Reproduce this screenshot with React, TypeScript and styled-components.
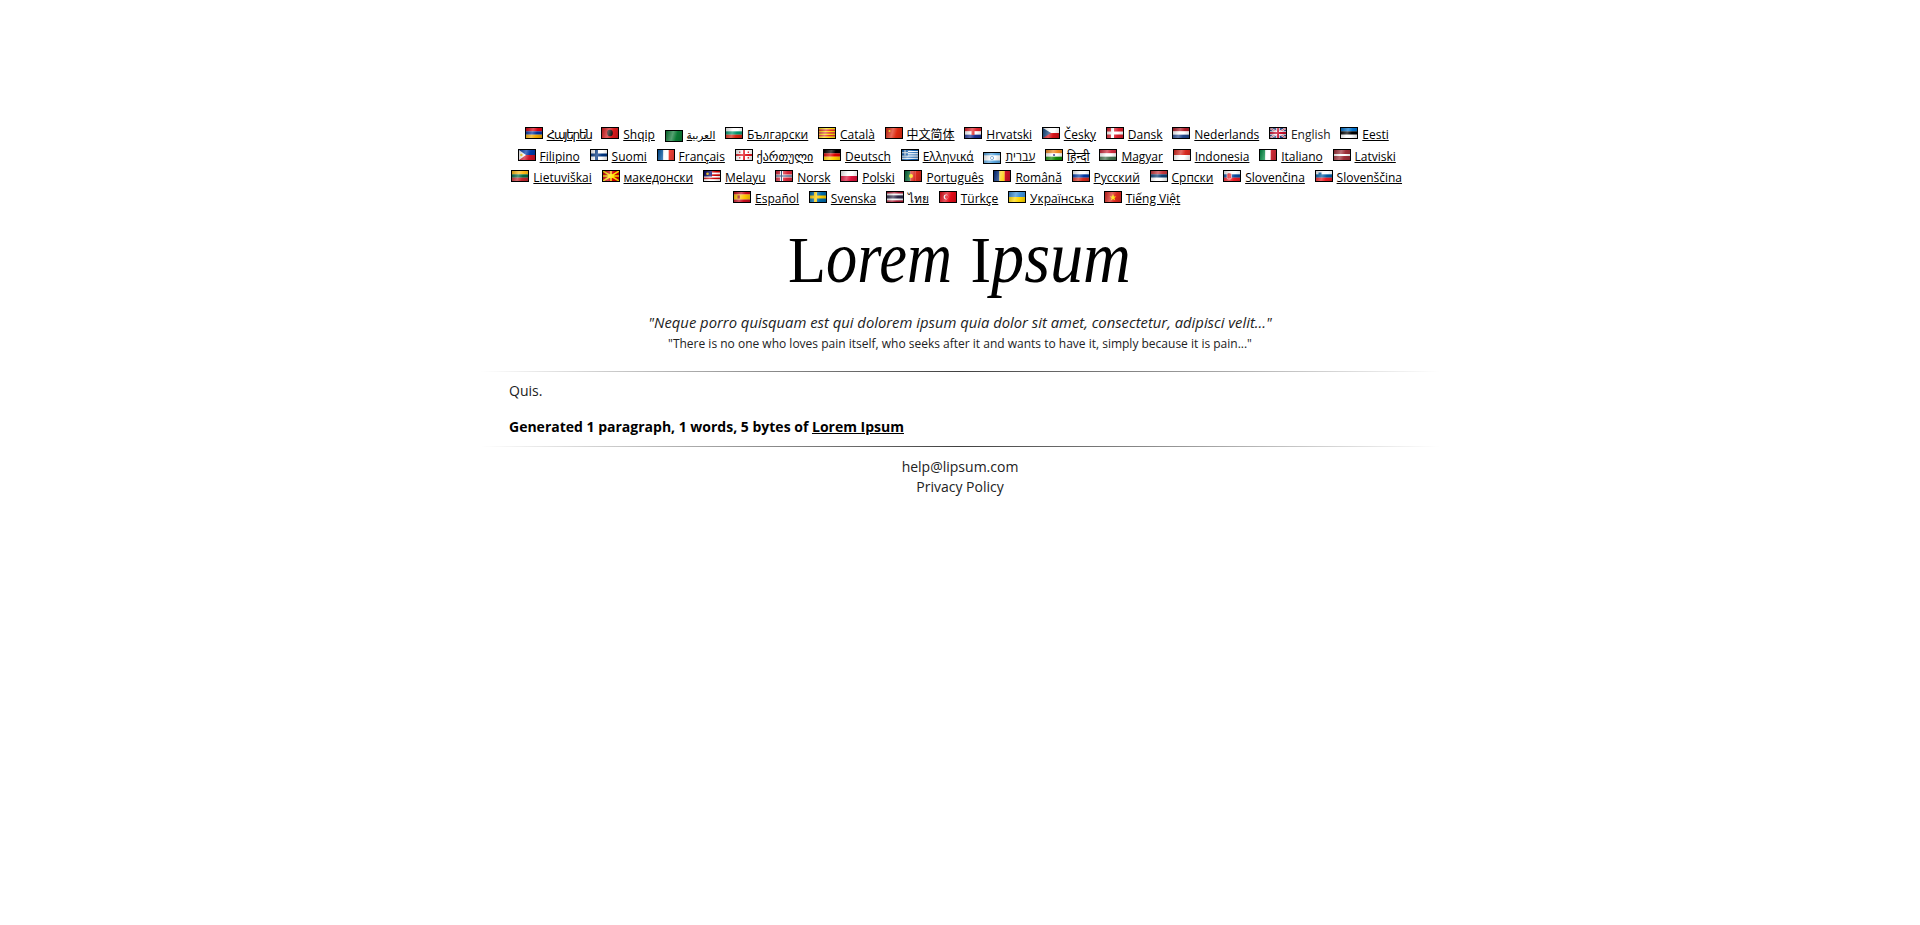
import React from "react";
import styled, { createGlobalStyle } from "styled-components";

const GlobalStyle = createGlobalStyle`
	html, body {
		margin: 0;
		padding: 0;
		background: #fff;
		color: #000;
		font-family: "Open Sans", "Noto Sans", sans-serif;
		font-size: 14px;
		line-height: 20px;
	}
`;

const Page = styled.div`
	width: 960px;
	margin: 0 auto;
	padding-top: 124px;
`;

const Languages = styled.div`
	width: 920px;
	margin: 0 auto;
	text-align: center;
	font-size: 12px;
	line-height: 21px;
`;

const LangItem = styled.span`
	display: inline-block;
	margin-right: 6.6px;
	white-space: nowrap;
`;

const LangLink = styled.a<{ $size?: number; $track?: number }>`
	color: #000;
	text-decoration: underline;
	font-family: "Open Sans", "Noto Sans", "Noto Sans CJK SC", "DejaVu Sans", sans-serif;
	font-size: ${({ $size }) => $size ?? 12}px;
	letter-spacing: ${({ $track }) => $track ?? 0}px;
`;

const LangPlain = styled.span`
	color: #222;
`;

const FlagBox = styled.span<{ $low?: boolean }>`
	display: inline-block;
	position: relative;
	width: 16px;
	height: 10px;
	border: 1px solid #000;
	margin-right: 4px;
	vertical-align: ${({ $low }) => ($low ? "-3px" : "0")};
	line-height: 0;
	overflow: hidden;

	svg {
		display: block;
		width: 16px;
		height: 10px;
	}

	&::after {
		content: "";
		position: absolute;
		inset: 0;
		background: linear-gradient(105deg, rgba(0, 0, 0, 0.22) 0%, rgba(255, 255, 255, 0.3) 40%, rgba(255, 255, 255, 0) 65%, rgba(0, 0, 0, 0.18) 100%);
	}
`;

const Logo = styled.svg`
	display: block;
	width: 344px;
	height: 80px;
	margin: 17px auto 0;
	font-family: "Liberation Serif", serif;
	fill: #000;
`;

const LogoText = styled.text`
	font-size: 65px;
`;

const LogoSlant = styled.tspan`
	font-size: 75px;
	font-style: italic;
`;

const Quote = styled.h4`
	margin: 6px 0 0;
	text-align: center;
	font-size: 14.8px;
	font-weight: 400;
	font-style: italic;
	line-height: 20px;
	color: #222;
`;

const Translation = styled.h5`
	margin: 2px 0 0;
	text-align: center;
	font-size: 12px;
	font-weight: 400;
	line-height: 20px;
	color: #222;
`;

const Divider = styled.hr`
	border: 0;
	height: 1px;
	margin: 0;
	background: linear-gradient(to right, rgba(0, 0, 0, 0), rgba(0, 0, 0, 0.75), rgba(0, 0, 0, 0));
`;

const TopDivider = styled(Divider)`
	margin-top: 17px;
`;

const Lipsum = styled.div`
	padding: 0 29px;
`;

const Paragraph = styled.p`
	margin: 9px 0 16px;
	color: #222;
`;

const Generated = styled.div`
	font-weight: 700;
	margin-bottom: 9px;
	color: #000;
`;

const GeneratedLink = styled.a`
	color: #000;
	text-decoration: underline;
`;

const Footer = styled.div`
	margin-top: 10px;
	text-align: center;
	color: #222;
`;

type Stripe = string[];

// plain striped flags, the few with an emblem get extra children
const H = ({ c, children }: { c: Stripe; children?: React.ReactNode }) => (
	<svg viewBox="0 0 16 10">
		{c.map((col, i) => (
			<rect key={i} x="0" y={(i * 10) / c.length} width="16" height={10 / c.length + 0.1} fill={col} />
		))}
		{children}
	</svg>
);

const V = ({ c, children }: { c: Stripe; children?: React.ReactNode }) => (
	<svg viewBox="0 0 16 10">
		{c.map((col, i) => (
			<rect key={i} x={(i * 16) / c.length} y="0" width={16 / c.length + 0.1} height="10" fill={col} />
		))}
		{children}
	</svg>
);

const Nordic = ({ bg, cross, inner }: { bg: string; cross: string; inner?: string }) => (
	<svg viewBox="0 0 16 10">
		<rect width="16" height="10" fill={bg} />
		<rect x="4" width="3" height="10" fill={cross} />
		<rect y="3.5" width="16" height="3" fill={cross} />
		{inner && <rect x="5" width="1" height="10" fill={inner} />}
		{inner && <rect y="4.5" width="16" height="1" fill={inner} />}
	</svg>
);

type Lang = { name: string; flag: React.ReactNode; low?: boolean; plain?: boolean; size?: number; track?: number };

const rows: Lang[] = [
	{ name: "Հայերեն", track: -1.3, flag: <H c={["#d90012", "#0033a0", "#f2a800"]} /> },
	{ name: "Shqip", flag: <H c={["#d81a1c"]}><ellipse cx="8" cy="5" rx="2.8" ry="3.2" fill="#111" /></H> },
	{ name: "العربية", low: true, size: 10.5, flag: <H c={["#0c7a35"]} /> },
	{ name: "Български", flag: <H c={["#fff", "#00966e", "#d62612"]} /> },
	{ name: "Català", flag: <H c={["#fcdd09", "#da121a", "#fcdd09", "#da121a", "#fcdd09", "#da121a", "#fcdd09"]} /> },
	{ name: "中文简体", flag: <H c={["#de2910"]}><circle cx="3.5" cy="3" r="1" fill="#ffde00" /></H> },
	{ name: "Hrvatski", flag: <H c={["#e0242c", "#fff", "#1a2f8f"]}><rect x="6.5" y="2.5" width="3" height="4.5" fill="#d33" /></H> },
	{ name: "Česky", flag: <H c={["#fff", "#d7141a"]}><polygon points="0,0 8,5 0,10" fill="#11457e" /></H> },
	{ name: "Dansk", flag: <Nordic bg="#d81e2c" cross="#fff" /> },
	{ name: "Nederlands", flag: <H c={["#ae1c28", "#fff", "#21468b"]} /> },
	{
		name: "English",
		plain: true,
		flag: (
			<svg viewBox="0 0 16 10">
				<rect width="16" height="10" fill="#1f3a7a" />
				<path d="M0 0L16 10M16 0L0 10" stroke="#fff" strokeWidth="2" />
				<path d="M0 0L16 10M16 0L0 10" stroke="#c8102e" strokeWidth="0.7" />
				<path d="M8 0V10M0 5H16" stroke="#fff" strokeWidth="3.4" />
				<path d="M8 0V10M0 5H16" stroke="#c8102e" strokeWidth="2" />
			</svg>
		),
	},
	{ name: "Eesti", flag: <H c={["#0072ce", "#000", "#fff"]} /> },

	{ name: "Filipino", flag: <H c={["#0038a8", "#ce1126"]}><polygon points="0,0 7,5 0,10" fill="#fff" /><circle cx="2.4" cy="5" r="1.2" fill="#fcd116" /></H> },
	{ name: "Suomi", flag: <Nordic bg="#fff" cross="#003580" /> },
	{ name: "Français", flag: <V c={["#0055a4", "#fff", "#ef4135"]} /> },
	{
		name: "ქართული",
		flag: (
			<svg viewBox="0 0 16 10">
				<rect width="16" height="10" fill="#fff" />
				<rect x="7" width="2" height="10" fill="#e01b24" />
				<rect y="4" width="16" height="2" fill="#e01b24" />
				<rect x="3" y="1.5" width="1.4" height="1.4" fill="#e01b24" />
				<rect x="11.6" y="1.5" width="1.4" height="1.4" fill="#e01b24" />
				<rect x="3" y="7.1" width="1.4" height="1.4" fill="#e01b24" />
				<rect x="11.6" y="7.1" width="1.4" height="1.4" fill="#e01b24" />
			</svg>
		),
	},
	{ name: "Deutsch", flag: <H c={["#000", "#dd0000", "#ffce00"]} /> },
	{ name: "Ελληνικά", flag: <H c={["#0d5eaf", "#fff", "#0d5eaf", "#fff", "#0d5eaf", "#fff", "#0d5eaf", "#fff", "#0d5eaf"]}><rect width="6" height="5.5" fill="#0d5eaf" /><path d="M3 0V5.5M0 2.75H6" stroke="#fff" strokeWidth="1" /></H> },
	{ name: "עברית", low: true, flag: <H c={["#5aa7e0", "#fff", "#fff", "#5aa7e0"]}><circle cx="8" cy="5" r="1.6" fill="none" stroke="#3a7fc0" strokeWidth="0.7" /></H> },
	{ name: "हिन्दी", flag: <H c={["#f08a24", "#fff", "#138808"]}><circle cx="8" cy="5" r="1.1" fill="#2a2a80" /></H> },
	{ name: "Magyar", flag: <H c={["#cd2a3e", "#fff", "#436f4d"]} /> },
	{ name: "Indonesia", flag: <H c={["#d8291f", "#fff"]} /> },
	{ name: "Italiano", flag: <V c={["#009246", "#fff", "#ce2b37"]} /> },
	{ name: "Latviski", flag: <H c={["#9e3039", "#9e3039", "#fff", "#9e3039", "#9e3039"]} /> },

	{ name: "Lietuviškai", flag: <H c={["#fdb913", "#006a44", "#c1272d"]} /> },
	{
		name: "македонски",
		flag: (
			<svg viewBox="0 0 16 10">
				<rect width="16" height="10" fill="#d20000" />
				<path d="M8 5L0 0M8 5L16 0M8 5L0 10M8 5L16 10M8 5V0M8 5V10M8 5H0M8 5H16" stroke="#ffe600" strokeWidth="1.5" />
				<circle cx="8" cy="5" r="1.8" fill="#ffe600" />
			</svg>
		),
	},
	{ name: "Melayu", flag: <H c={["#cc0001", "#fff", "#cc0001", "#fff", "#cc0001", "#fff"]}><rect width="8" height="5.5" fill="#010066" /><circle cx="3.5" cy="2.7" r="1.3" fill="#ffcc00" /></H> },
	{ name: "Norsk", flag: <Nordic bg="#d8283a" cross="#fff" inner="#00205b" /> },
	{ name: "Polski", flag: <H c={["#fff", "#dc143c"]} /> },
	{ name: "Português", flag: <V c={["#046a38", "#da291c", "#da291c"]}><circle cx="6" cy="5" r="2" fill="#ffe000" /></V> },
	{ name: "Română", flag: <V c={["#002b7f", "#fcd116", "#ce1126"]} /> },
	{ name: "Русский", flag: <H c={["#fff", "#0039a6", "#d52b1e"]} /> },
	{ name: "Српски", flag: <H c={["#c6363c", "#0c4076", "#fff"]} /> },
	{ name: "Slovenčina", flag: <H c={["#fff", "#0b4ea2", "#ee1c25"]}><rect x="3" y="2" width="4.5" height="6" rx="1.5" fill="#ee1c25" stroke="#fff" strokeWidth="0.6" /></H> },
	{ name: "Slovenščina", flag: <H c={["#fff", "#005da4", "#ed1c24"]}><rect x="2.5" y="1.5" width="3" height="3.5" fill="#005da4" /></H> },

	{ name: "Español", flag: <H c={["#c60b1e", "#ffc400", "#ffc400", "#c60b1e"]}><rect x="3.5" y="3.4" width="2.4" height="3.2" fill="#ad1519" /></H> },
	{ name: "Svenska", flag: <Nordic bg="#006aa7" cross="#fecc00" /> },
	{ name: "ไทย", flag: <H c={["#a51931", "#f4f5f8", "#2d2a4a", "#2d2a4a", "#f4f5f8", "#a51931"]} /> },
	{ name: "Türkçe", flag: <H c={["#e30a17"]}><circle cx="6" cy="5" r="2.4" fill="#fff" /><circle cx="6.8" cy="5" r="1.9" fill="#e30a17" /></H> },
	{ name: "Українська", flag: <H c={["#3d8fd6", "#ffd700"]} /> },
	{ name: "Tiếng Việt", flag: <H c={["#da251d"]}><polygon points="8,1.8 9,4.4 11.4,4.4 9.4,6 10.2,8.4 8,7 5.8,8.4 6.6,6 4.6,4.4 7,4.4" fill="#ffde00" /></H> },
];

export default function App() {
	return (
		<>
			<GlobalStyle />
			<Page>
				<Languages>
					{rows.map((lang) => (
						<React.Fragment key={lang.name}>
							<LangItem>
								<FlagBox $low={lang.low}>{lang.flag}</FlagBox>
								{lang.plain ? (
									<LangPlain>{lang.name}</LangPlain>
								) : (
									<LangLink href="#" $size={lang.size} $track={lang.track}>
										{lang.name}
									</LangLink>
								)}
							</LangItem>{" "}
						</React.Fragment>
					))}
				</Languages>
				<Logo viewBox="0 0 344 80">
					<LogoText y="56">
						<tspan x="0" textLength="38" lengthAdjust="spacingAndGlyphs">L</tspan>
						<LogoSlant x="38" textLength="126" lengthAdjust="spacingAndGlyphs">orem</LogoSlant>
						<tspan x="167" textLength="36" lengthAdjust="spacingAndGlyphs"> I</tspan>
						<LogoSlant x="203" textLength="140" lengthAdjust="spacingAndGlyphs">psum</LogoSlant>
					</LogoText>
				</Logo>
				<Quote>"Neque porro quisquam est qui dolorem ipsum quia dolor sit amet, consectetur, adipisci velit..."</Quote>
				<Translation>"There is no one who loves pain itself, who seeks after it and wants to have it, simply because it is pain..."</Translation>
				<TopDivider />
				<Lipsum>
					<Paragraph>Quis.</Paragraph>
					<Generated>
						Generated 1 paragraph, 1 words, 5 bytes of <GeneratedLink href="#">Lorem Ipsum</GeneratedLink>
					</Generated>
				</Lipsum>
				<Divider />
				<Footer>
					<div>help@lipsum.com</div>
					<div>Privacy Policy</div>
				</Footer>
			</Page>
		</>
	);
}
